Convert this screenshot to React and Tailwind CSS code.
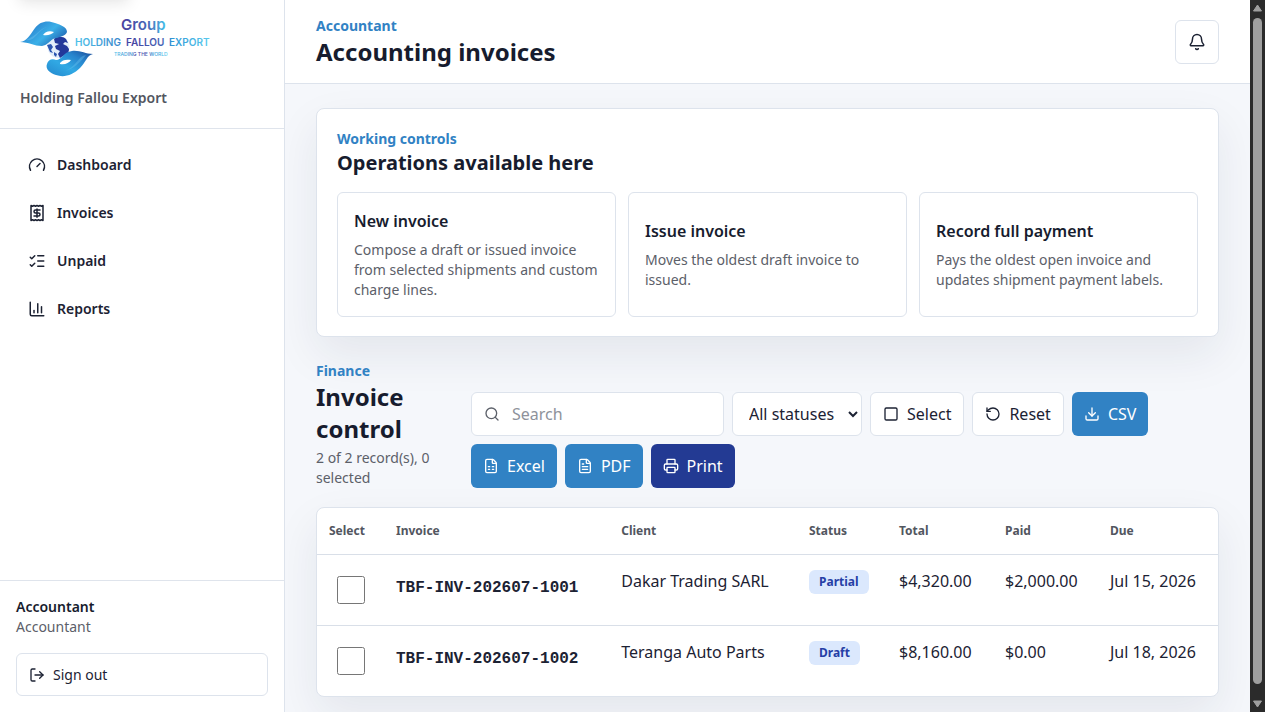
import React, { useState } from 'react';
import {
  Bell,
  ChartColumn,
  Download,
  FileSpreadsheet,
  FileText,
  Gauge,
  ListChecks,
  LogOut,
  Printer,
  Receipt,
  RotateCcw,
  Search,
  Square
} from 'lucide-react';

const navItems = [
  { label: 'Dashboard', icon: Gauge },
  { label: 'Invoices', icon: Receipt },
  { label: 'Unpaid', icon: ListChecks },
  { label: 'Reports', icon: ChartColumn }
];

const operations = [
  { title: 'New invoice', text: 'Compose a draft or issued invoice from selected shipments and custom charge lines.' },
  { title: 'Issue invoice', text: 'Moves the oldest draft invoice to issued.' },
  { title: 'Record full payment', text: 'Pays the oldest open invoice and updates shipment payment labels.' }
];

const invoices = [
  { number: 'TBF-INV-202607-1001', client: 'Dakar Trading SARL', status: 'Partial', total: '$4,320.00', paid: '$2,000.00', due: 'Jul 15, 2026' },
  { number: 'TBF-INV-202607-1002', client: 'Teranga Auto Parts', status: 'Draft', total: '$8,160.00', paid: '$0.00', due: 'Jul 18, 2026' }
];

function Logo() {
  return (
    <svg className="block" width="200" height="68" viewBox="0 -6 200 68" role="img" aria-label="Group Holding Fallou Export">
      <defs>
        <linearGradient id="hand" x1="0" y1="0" x2="1" y2="0.6">
          <stop offset="0" stopColor="#1f5fae" />
          <stop offset="0.35" stopColor="#2f8fd6" />
          <stop offset="0.65" stopColor="#3bb0e8" />
          <stop offset="1" stopColor="#2168b5" />
        </linearGradient>
        <linearGradient id="palm" x1="0" y1="1" x2="1" y2="0">
          <stop offset="0" stopColor="#2387cd" />
          <stop offset="0.4" stopColor="#31a9e4" />
          <stop offset="0.7" stopColor="#2784cd" />
          <stop offset="1" stopColor="#1b4895" />
        </linearGradient>
        <linearGradient id="group" x1="0" x2="1">
          <stop offset="0" stopColor="#4a3f9f" />
          <stop offset="0.6" stopColor="#4668b8" />
          <stop offset="1" stopColor="#45c0ea" />
        </linearGradient>
        <linearGradient id="name" x1="0" x2="1">
          <stop offset="0" stopColor="#4fc3ea" />
          <stop offset="0.34" stopColor="#3c86cb" />
          <stop offset="0.4" stopColor="#45409f" />
          <stop offset="0.66" stopColor="#4566b8" />
          <stop offset="0.72" stopColor="#2f97d6" />
          <stop offset="1" stopColor="#5bcbee" />
        </linearGradient>
      </defs>
      {/* globe between the two hands */}
      <circle cx="38.500" cy="29" r="11" fill="#e3eefa" />
      <path d="M34 21C37 18 43 18 46 21L48 25L45 24L43 26L47 28L49 31C49 35 46 37 43 38L40 40L38 36L40 33L36 31L35 28L39 26L35 25Z" fill="#23389a" />
      <path d="M27 27L31 26L33 29L31 32L33 35L30 34ZM34 34L37 36L36 39L34 37Z" fill="#2c56b0" />
      <path d="M0 24C7 23 10 17 15 10C20 3 28 2 35 5C41 7 47 9 47 14C46 18 39 19 33 21C29 24 27 27 22 28C14 28 9 24 0 24Z" fill="url(#hand)" />
      <path d="M6 22C15 24 17 13 27 9C20 10 18 17 6 22Z" fill="#7ac9f1" opacity="0.35" />
      <path d="M23 17C25 14 29 12 34 14C32 16 28 18 23 17Z" fill="#fff" />
      <path d="M73 36C67 37 66 44 60 50C53 57 44 60 36 57C30 55 25 51 27 46C28 42 32 40 36 42C42 42 43 34 52 33C60 32 65 36 73 36Z" fill="url(#palm)" />
      <path d="M66 37C58 38 56 49 45 53C53 51 60 45 66 37Z" fill="#72c9f2" opacity="0.35" />
      <path d="M40 45C42 42 46 41 51 42C49 45 45 47 40 46Z" fill="#fff" />
      <text x="101" y="12" fontSize="15" fontWeight="600" fontFamily="Inter, sans-serif" fill="url(#group)">Group</text>
      <text y="28" fontSize="10" fontWeight="600" fontFamily="Inter, sans-serif" fill="url(#name)">
        <tspan x="55">HOLDING</tspan> <tspan x="106">FALLOU</tspan> <tspan x="149">EXPORT</tspan>
      </text>
      <text x="94" y="38" fontSize="5" fontWeight="500" fontFamily="Inter, sans-serif" fill="url(#name)">TRADING THE WORLD</text>
    </svg>
  );
}

function Sidebar() {
  return (
    <aside className="relative flex w-[285px] shrink-0 flex-col border-r border-[#dde3ec] bg-white">
      <div aria-hidden="true" className="absolute -top-11 left-4 h-10 w-[116px] shadow-lg" />
      <div className="flex h-[129px] shrink-0 flex-col gap-2 border-b border-[#dfe4ec] px-5 pt-3">
        <Logo />
        <p className="text-sm font-semibold text-[#52565f]">Holding Fallou Export</p>
      </div>
      <nav className="flex flex-1 flex-col gap-1 px-4 pt-[14px]">
        {navItems.map(({ label, icon: Icon }) => (
          <a key={label} href="#" className="flex h-11 items-center gap-[11px] rounded-md px-3 text-sm font-semibold text-[#1c2233]">
            <Icon size={18} className="shrink-0" />
            {label}
          </a>
        ))}
      </nav>
      <div className="border-t border-[#dfe4ec] px-4 py-4 text-sm">
        <p className="font-semibold text-[#171c2e]">Accountant</p>
        <p className="text-[#5c6069]">Accountant</p>
        <button type="button" className="mt-4 flex h-[43px] w-full items-center gap-2 rounded-md border border-[#dde3ec] bg-white px-3 text-[#1c2233]">
          <LogOut size={16} /> Sign out
        </button>
      </div>
    </aside>
  );
}

function ToolButton({ icon: Icon, children, variant = 'plain' }) {
  const styles = {
    plain: 'border border-[#dde3ec] bg-white text-[#1c2233]',
    blue: 'bg-[#3182c4] text-white',
    navy: 'bg-[#233a93] text-white'
  };

  return (
    <button type="button" className={`flex h-11 items-center gap-2 rounded-md px-3 ${styles[variant]}`}>
      <Icon size={16} /> {children}
    </button>
  );
}

function Operations() {
  return (
    <section className="rounded-lg border border-[#dde3ec] bg-white px-5 pt-5 pb-[19px] shadow-[0_18px_45px_rgba(26,32,64,0.08)]">
      <p className="text-sm font-bold text-[#3182c4]">Working controls</p>
      <h2 className="text-xl font-bold text-[#171c2e]">Operations available here</h2>
      <div className="mt-[15px] grid grid-cols-3 gap-3">
        {operations.map(op => (
          <button key={op.title} type="button" className="flex flex-col justify-center gap-[7px] rounded-md border border-[#dde3ec] bg-white p-4 text-left">
            <span className="font-semibold text-[#171c2e]">{op.title}</span>
            <span className="text-sm text-[#5c6069]">{op.text}</span>
          </button>
        ))}
      </div>
    </section>
  );
}

function Toolbar({ search, setSearch, selectedCount }) {
  return (
    <div className="flex items-end gap-4">
      <div className="w-[139px] shrink-0">
        <p className="text-sm font-bold text-[#3182c4]">Finance</p>
        <h2 className="text-2xl font-bold text-[#171c2e]">Invoice control</h2>
        <p className="mt-[3px] text-sm text-[#5c6069]">2 of 2 record(s), {selectedCount} selected</p>
      </div>
      <div className="flex flex-1 flex-wrap gap-2">
        <label className="flex h-11 w-[253px] items-center gap-3 rounded-md border border-[#dde3ec] bg-white px-3 text-[#5c6069]">
          <Search size={16} className="shrink-0" />
          <input
            type="text"
            aria-label="Search"
            placeholder="Search"
            value={search}
            onChange={e => setSearch(e.target.value)}
            className="w-full min-w-0 bg-transparent outline-none placeholder:text-[#8e929b]"
          />
        </label>
        <select aria-label="Status" className="h-11 w-[130px] rounded-md border border-[#dde3ec] bg-white pl-3 text-[#1c2233]">
          <option>All statuses</option>
          <option>Draft</option>
          <option>Partial</option>
        </select>
        <ToolButton icon={Square}>Select</ToolButton>
        <ToolButton icon={RotateCcw}>Reset</ToolButton>
        <ToolButton icon={Download} variant="blue">CSV</ToolButton>
        <ToolButton icon={FileSpreadsheet} variant="blue">Excel</ToolButton>
        <ToolButton icon={FileText} variant="blue">PDF</ToolButton>
        <ToolButton icon={Printer} variant="navy">Print</ToolButton>
      </div>
    </div>
  );
}

function InvoiceTable({ selected, toggle }) {
  return (
    <div className="overflow-hidden rounded-lg border border-[#dde3ec] bg-white shadow-[0_18px_45px_rgba(26,32,64,0.08)]">
      <table className="w-full table-fixed text-left">
        <colgroup>
          <col className="w-[67px]" />
          <col className="w-[25%]" />
          <col />
          <col className="w-[90px]" />
          <col className="w-[106px]" />
          <col className="w-[105px]" />
          <col className="w-[120px]" />
        </colgroup>
        <thead>
          <tr className="h-[46px] text-xs text-[#52565f]">
            <th className="px-3 font-bold">Select</th>
            <th className="px-3 font-bold">Invoice</th>
            <th className="px-3 font-bold">Client</th>
            <th className="px-3 font-bold">Status</th>
            <th className="px-3 font-bold">Total</th>
            <th className="px-3 font-bold">Paid</th>
            <th className="px-3 font-bold">Due</th>
          </tr>
        </thead>
        <tbody>
          {invoices.map(inv => (
            <tr key={inv.number} className="h-[71px] border-t border-[#d9dfe8] align-top whitespace-nowrap text-[#1c2233]">
              <td className="px-5 pt-[21px]">
                <input
                  type="checkbox"
                  aria-label={`Select ${inv.number}`}
                  checked={selected.includes(inv.number)}
                  onChange={() => toggle(inv.number)}
                  className="block h-7 w-7"
                />
              </td>
              <td className="px-3 pt-[21px] font-['Liberation_Mono',monospace] font-bold">
                <a href="#">{inv.number}</a>
              </td>
              <td className="px-3 pt-[14px]">{inv.client}</td>
              <td className="px-3 pt-[15px]">
                <span className="block w-fit rounded-md bg-[#dbe8fd] px-[10px] py-1 text-xs font-bold text-[#263fa6]">{inv.status}</span>
              </td>
              <td className="px-3 pt-[14px]">{inv.total}</td>
              <td className="px-3 pt-[14px]">{inv.paid}</td>
              <td className="px-3 pt-[14px]">{inv.due}</td>
            </tr>
          ))}
        </tbody>
      </table>
    </div>
  );
}

function ScrollTrack() {
  return (
    <div aria-hidden="true" className="flex w-[15px] shrink-0 flex-col items-center justify-between bg-[#2b2b2b] py-1">
      <svg width="9" height="8" viewBox="0 0 9 8"><path d="M4.500 1L8.500 7H.5Z" fill="#9f9f9f" stroke="#9f9f9f" strokeLinejoin="round" /></svg>
      <div className="my-[6px] w-[9px] flex-1 rounded-full bg-[#9f9f9f]" />
      <svg className="mt-[10px]" width="9" height="8" viewBox="0 0 9 8"><path d="M4.500 7L8.500 1H.5Z" fill="#9f9f9f" stroke="#9f9f9f" strokeLinejoin="round" /></svg>
    </div>
  );
}

export default function App() {
  const [search, setSearch] = useState('');
  const [selected, setSelected] = useState([]);

  const toggle = (number) =>
    setSelected(list => (list.includes(number) ? list.filter(n => n !== number) : [...list, number]));

  return (
    <div className="flex h-screen overflow-hidden bg-[#f5f7fb] font-['Noto_Sans',sans-serif]">
      <Sidebar />
      <div className="flex min-w-0 flex-1 flex-col overflow-hidden">
        <header className="flex h-21 shrink-0 items-center justify-between border-b border-[#dde3ec] bg-white px-[31px]">
          <div>
            <p className="text-sm font-bold text-[#3182c4]">Accountant</p>
            <h1 className="text-2xl font-bold text-[#171c2e]">Accounting invoices</h1>
          </div>
          <button type="button" aria-label="Notifications" className="flex h-11 w-11 items-center justify-center rounded-md border border-[#dde3ec] bg-white text-[#1c2233]">
            <Bell size={18} />
          </button>
        </header>
        <main className="flex min-h-0 flex-1 flex-col px-[31px] pt-6">
          <Operations />
          <div className="mt-6 mb-[19px]">
            <Toolbar search={search} setSearch={setSearch} selectedCount={selected.length} />
          </div>
          <InvoiceTable selected={selected} toggle={toggle} />
        </main>
      </div>
      <ScrollTrack />
    </div>
  );
}
